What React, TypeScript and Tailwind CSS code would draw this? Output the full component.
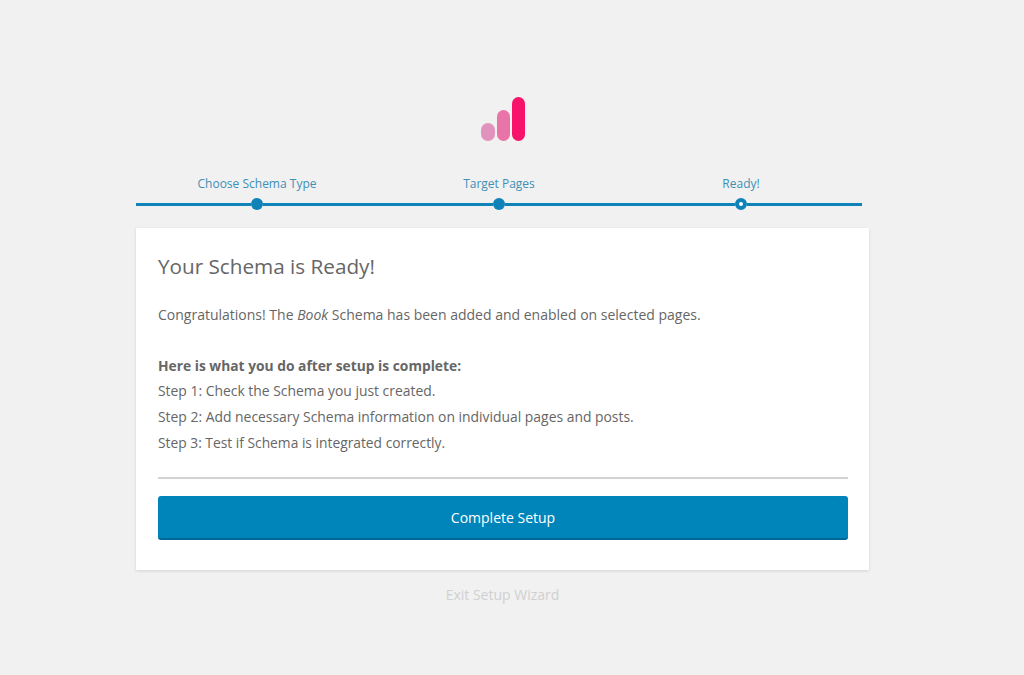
const steps = [
  { label: 'Choose Schema Type', done: true },
  { label: 'Target Pages', done: true },
  { label: 'Ready!', done: false },
];

function Logo() {
  return (
    <svg width="44" height="44" viewBox="0 0 44 44" className="block">
      <rect x="0" y="26" width="14" height="18" rx="7" fill="#e193bd" />
      <rect x="16" y="13" width="13" height="31" rx="6.5" fill="#e874a8" />
      <rect x="31" y="0" width="13" height="44" rx="6.5" fill="#f7136a" />
    </svg>
  );
}

function Stepper() {
  return (
    <div className="grid w-[726px] grid-cols-3">
      {steps.map((step) => (
        <div key={step.label} className="flex flex-col items-center">
          <div className="mb-[5px] text-[12px] leading-[18px] text-[#3f8fb5]">{step.label}</div>
          <div className="flex h-3 w-full items-center">
            <div className="h-[3px] flex-1 bg-[#0f82b8]" />
            {step.done ? (
              <div className="h-3 w-3 rounded-full bg-[#0f82b8]" />
            ) : (
              <div className="h-3 w-3 rounded-full border-4 border-[#0f82b8] bg-white" />
            )}
            <div className="h-[3px] flex-1 bg-[#0f82b8]" />
          </div>
        </div>
      ))}
    </div>
  );
}

export default function App() {
  return (
    <div className="min-h-[675px] bg-[#f1f1f1] pl-[136px] pt-[97px] font-['Open_Sans',sans-serif]">
      <div className="w-[733px]">
        <div className="mb-[34px] flex w-[733px] justify-center">
          <Logo />
        </div>
        <Stepper />
        <div className="mt-[18px] h-[342px] bg-white pl-[22px] pr-[21px] pt-[23px] shadow-[0_1px_3px_rgba(0,0,0,0.13)]">
          <h1 className="text-[20.7px] leading-[30px] font-normal text-[#666666]">Your Schema is Ready!</h1>
          <p className="mt-[21px] text-[14px] leading-[26px] text-[#666666]">
            Congratulations! The <em>Book</em> Schema has been added and enabled on selected pages.
          </p>
          <div className="mt-[26px] text-[13.9px] leading-[26px] text-[#666666]">
            <p className="text-[13.8px] leading-[24px] font-bold">Here is what you do after setup is complete:</p>
            <p>Step 1: Check the Schema you just created.</p>
            <p>Step 2: Add necessary Schema information on individual pages and posts.</p>
            <p className="text-[13.8px]">Step 3: Test if Schema is integrated correctly.</p>
          </div>
          <div className="mt-[21px] h-[2px] bg-[#d2d2d4]" />
          <button className="mt-[17px] block h-[44px] w-full rounded-[3px] border-b-2 border-[#006799] bg-[#0085ba] text-[14px] text-white">
            Complete Setup
          </button>
        </div>
        <div className="mt-4 text-center text-[14px] leading-[18px] text-[#d0d0d0]">Exit Setup Wizard</div>
      </div>
    </div>
  );
}
